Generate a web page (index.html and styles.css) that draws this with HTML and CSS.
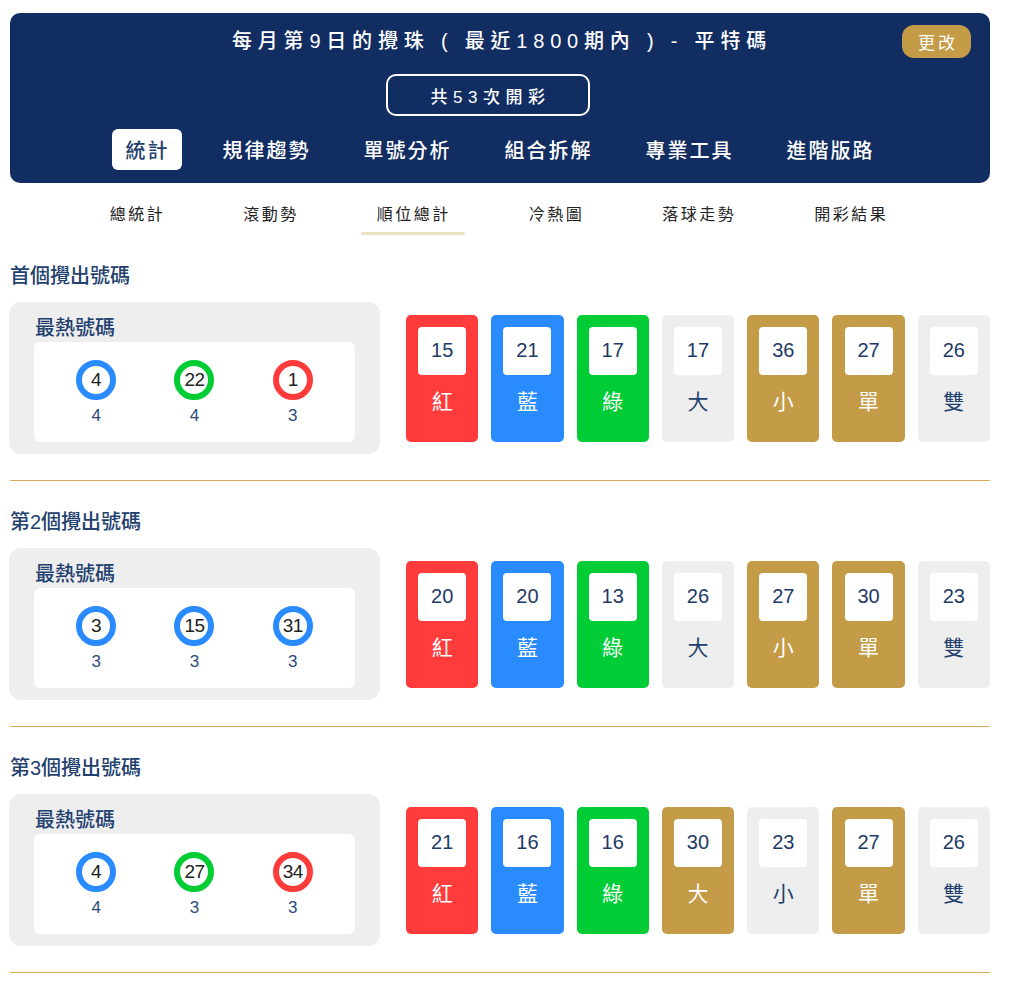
FILE: index.html
```html
<!DOCTYPE html>
<html lang="zh-Hant">
<head>
<meta charset="utf-8">
<title>順位總計</title>
<link rel="stylesheet" href="styles.css">
</head>
<body>
<div class="page">
  <header class="hero">
    <h1 class="hero-title">每月第9日的攪珠 ( 最近1800期內 ) - 平特碼</h1>
    <button class="change-btn">更改</button>
    <div class="count-row"><div class="count-box">共53次開彩</div></div>
    <nav class="main-nav">
      <a class="main-item active">統計</a>
      <a class="main-item">規律趨勢</a>
      <a class="main-item">單號分析</a>
      <a class="main-item">組合拆解</a>
      <a class="main-item">專業工具</a>
      <a class="main-item">進階版路</a>
    </nav>
  </header>

  <nav class="sub-nav">
    <a class="sub-item">總統計</a>
    <a class="sub-item">滾動勢</a>
    <a class="sub-item active">順位總計</a>
    <a class="sub-item">冷熱圖</a>
    <a class="sub-item">落球走勢</a>
    <a class="sub-item">開彩結果</a>
  </nav>

  <section class="block">
    <h2 class="block-title">首個攪出號碼</h2>
    <div class="block-row">
      <div class="hot">
        <div class="hot-title">最熱號碼</div>
        <div class="hot-list">
          <div class="hot-item"><span class="ball blue">4</span><span class="hot-count">4</span></div>
          <div class="hot-item"><span class="ball green">22</span><span class="hot-count">4</span></div>
          <div class="hot-item"><span class="ball red">1</span><span class="hot-count">3</span></div>
        </div>
      </div>
      <div class="cards">
        <div class="card red"><div class="card-num">15</div><div class="card-label">紅</div></div>
        <div class="card blue"><div class="card-num">21</div><div class="card-label">藍</div></div>
        <div class="card green"><div class="card-num">17</div><div class="card-label">綠</div></div>
        <div class="card plain"><div class="card-num">17</div><div class="card-label">大</div></div>
        <div class="card gold"><div class="card-num">36</div><div class="card-label">小</div></div>
        <div class="card gold"><div class="card-num">27</div><div class="card-label">單</div></div>
        <div class="card plain"><div class="card-num">26</div><div class="card-label">雙</div></div>
      </div>
    </div>
    <hr class="divider">
  </section>

  <section class="block">
    <h2 class="block-title">第2個攪出號碼</h2>
    <div class="block-row">
      <div class="hot">
        <div class="hot-title">最熱號碼</div>
        <div class="hot-list">
          <div class="hot-item"><span class="ball blue">3</span><span class="hot-count">3</span></div>
          <div class="hot-item"><span class="ball blue">15</span><span class="hot-count">3</span></div>
          <div class="hot-item"><span class="ball blue">31</span><span class="hot-count">3</span></div>
        </div>
      </div>
      <div class="cards">
        <div class="card red"><div class="card-num">20</div><div class="card-label">紅</div></div>
        <div class="card blue"><div class="card-num">20</div><div class="card-label">藍</div></div>
        <div class="card green"><div class="card-num">13</div><div class="card-label">綠</div></div>
        <div class="card plain"><div class="card-num">26</div><div class="card-label">大</div></div>
        <div class="card gold"><div class="card-num">27</div><div class="card-label">小</div></div>
        <div class="card gold"><div class="card-num">30</div><div class="card-label">單</div></div>
        <div class="card plain"><div class="card-num">23</div><div class="card-label">雙</div></div>
      </div>
    </div>
    <hr class="divider">
  </section>

  <section class="block">
    <h2 class="block-title">第3個攪出號碼</h2>
    <div class="block-row">
      <div class="hot">
        <div class="hot-title">最熱號碼</div>
        <div class="hot-list">
          <div class="hot-item"><span class="ball blue">4</span><span class="hot-count">4</span></div>
          <div class="hot-item"><span class="ball green">27</span><span class="hot-count">3</span></div>
          <div class="hot-item"><span class="ball red">34</span><span class="hot-count">3</span></div>
        </div>
      </div>
      <div class="cards">
        <div class="card red"><div class="card-num">21</div><div class="card-label">紅</div></div>
        <div class="card blue"><div class="card-num">16</div><div class="card-label">藍</div></div>
        <div class="card green"><div class="card-num">16</div><div class="card-label">綠</div></div>
        <div class="card gold"><div class="card-num">30</div><div class="card-label">大</div></div>
        <div class="card plain"><div class="card-num">23</div><div class="card-label">小</div></div>
        <div class="card gold"><div class="card-num">27</div><div class="card-label">單</div></div>
        <div class="card plain"><div class="card-num">26</div><div class="card-label">雙</div></div>
      </div>
    </div>
    <hr class="divider">
  </section>
</div>
</body>
</html>
```

FILE: styles.css
```css
* { box-sizing: border-box; }

body {
  margin: 0;
  background: #ffffff;
  font-family: "Liberation Sans", "Noto Sans CJK TC", Arial, sans-serif;
  color: #23416e;
}

.page {
  width: 980px;
  margin-left: 10px;
  padding-top: 13px;
}

/* Header */
.hero {
  position: relative;
  background: #122d62;
  border-radius: 10px;
  padding: 14px 0 13px;
  display: flex;
  flex-direction: column;
  align-items: center;
}

.hero-title {
  margin: 0;
  font-size: 20px;
  line-height: 28px;
  font-weight: 500;
  letter-spacing: 5.8px;
  color: #ffffff;
  padding-left: 4px;
}

.change-btn {
  position: absolute;
  top: 12px;
  right: 19px;
  width: 69px;
  height: 33px;
  border: none;
  border-radius: 12px;
  background: #c49b47;
  color: #ffffff;
  font-family: "Liberation Sans", "Noto Sans CJK TC", sans-serif;
  font-size: 17px;
  letter-spacing: 3px;
  padding: 0 0 0 3px;
}

.count-row {
  margin-top: 19px;
  padding-right: 24px;
  align-self: stretch;
  display: flex;
  justify-content: center;
}

.count-box {
  width: 204px;
  height: 42px;
  border: 2px solid #ffffff;
  border-radius: 10px;
  color: #ffffff;
  font-size: 17px;
  letter-spacing: 5.5px;
  font-weight: 500;
  display: flex;
  align-items: center;
  justify-content: center;
  padding-left: 5px;
}

.main-nav {
  margin-top: 13px;
  display: flex;
  gap: 27px;
  padding-right: 2px;
}

.main-item {
  height: 41px;
  padding: 0 12px 0 14px;
  border-radius: 6px;
  font-size: 20px;
  letter-spacing: 2px;
  font-weight: 500;
  color: #ffffff;
  display: flex;
  align-items: center;
}

.main-item.active {
  background: #ffffff;
  color: #23416e;
}

/* Sub navigation */
.sub-nav {
  margin-top: 20px;
  display: flex;
  justify-content: center;
  gap: 48px;
  padding-right: 4px;
}

.sub-item {
  position: relative;
  padding: 0 14px 8px 16px;
  font-size: 16px;
  line-height: 24px;
  letter-spacing: 2.5px;
  color: #222222;
}

.sub-item.active::after {
  content: "";
  position: absolute;
  left: 0;
  right: 0;
  bottom: 0;
  height: 3px;
  border-radius: 2px;
  background: #eee0c3;
}

/* Blocks */
.block-title {
  margin: 27px 0 0;
  font-size: 20px;
  line-height: 28px;
  font-weight: 500;
  color: #23416e;
}

.block-row {
  margin-top: 12px;
  display: flex;
  align-items: center;
  gap: 26px;
}

.hot {
  width: 371px;
  margin-left: -1px;
  background: #eeeeee;
  border-radius: 12px;
  padding: 14px 25px 12px;
}

.hot-title {
  font-size: 20px;
  line-height: 24px;
  font-weight: 500;
  color: #23416e;
  padding-left: 1px;
}

.hot-list {
  margin-top: 2px;
  background: #ffffff;
  border-radius: 6px;
  height: 100px;
  padding: 18px 13px 0;
  display: grid;
  grid-template-columns: repeat(3, 1fr);
}

.hot-item {
  display: flex;
  flex-direction: column;
  align-items: center;
}

.ball {
  width: 40px;
  height: 40px;
  border-radius: 50%;
  border: 6px solid;
  background: #ffffff;
  display: flex;
  align-items: center;
  justify-content: center;
  font-size: 19px;
  color: #222222;
  letter-spacing: -0.5px;
}

.ball.blue { border-color: #2a8bff; }
.ball.green { border-color: #00cc33; }
.ball.red { border-color: #ff3b3b; }

.hot-count {
  margin-top: 5px;
  font-size: 17px;
  line-height: 22px;
  color: #2b4a7c;
}

.cards {
  flex: 1;
  display: flex;
  gap: 13px;
}

.card {
  flex: 1;
  height: 127px;
  border-radius: 5px;
  padding: 12px 12px 0;
  display: flex;
  flex-direction: column;
  align-items: center;
}

.card.red { background: #ff3b3b; }
.card.blue { background: #2a8bff; }
.card.green { background: #00cc36; }
.card.gold { background: #c49b47; }
.card.plain { background: #eeeeee; }

.card-num {
  width: 48px;
  height: 48px;
  background: #ffffff;
  border-radius: 4px;
  display: flex;
  align-items: center;
  justify-content: center;
  font-size: 20px;
  color: #1e3a66;
}

.card-label {
  margin-top: 13px;
  font-size: 21px;
  line-height: 28px;
  color: #ffffff;
}

.card.plain .card-label { color: #23416e; }

.divider {
  margin: 26px 0 0;
  border: none;
  height: 1px;
  background: #d4aa5a;
}
```
